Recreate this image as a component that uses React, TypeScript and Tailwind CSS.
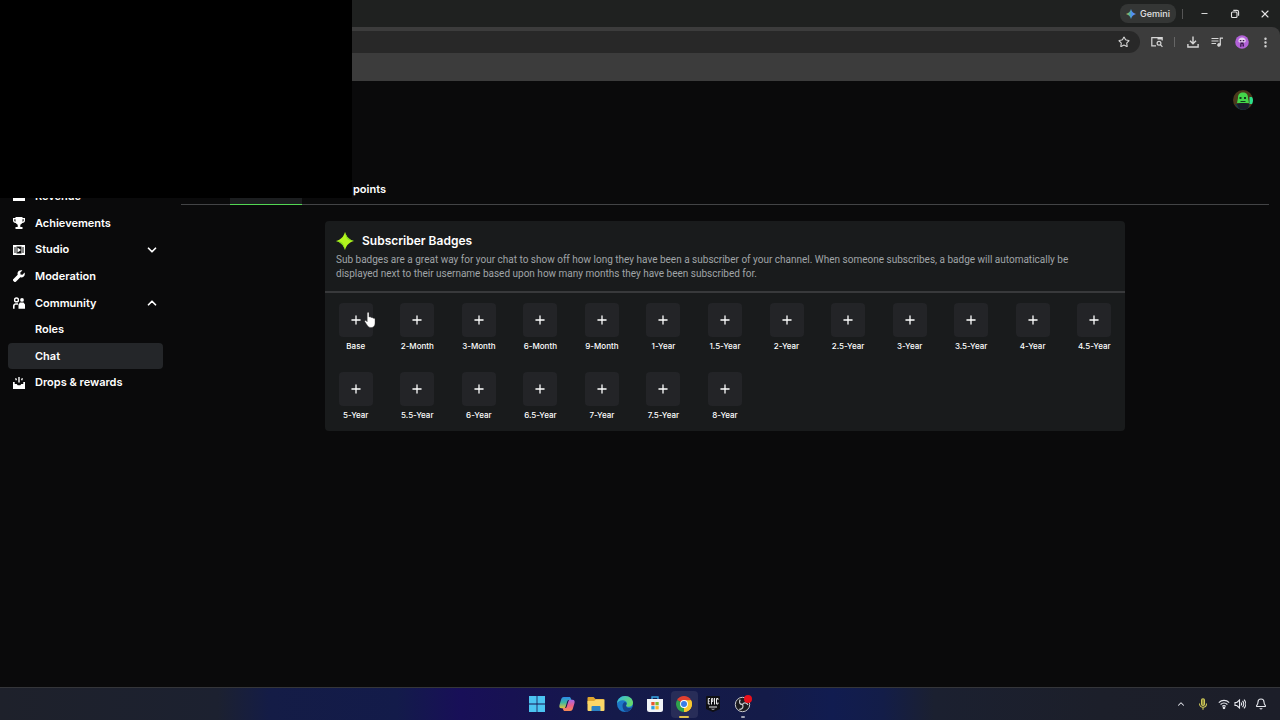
import type { ReactNode } from "react";
import { Bell, ChevronDown, ChevronUp, Minus, MoreVertical, Plus, Star, X } from "lucide-react";

const badges = [
  "Base", "2-Month", "3-Month", "6-Month", "9-Month", "1-Year", "1.5-Year",
  "2-Year", "2.5-Year", "3-Year", "3.5-Year", "4-Year", "4.5-Year",
  "5-Year", "5.5-Year", "6-Year", "6.5-Year", "7-Year", "7.5-Year", "8-Year",
];

interface NavItem {
  label: string;
  icon?: ReactNode;
  open?: boolean;
  active?: boolean;
}

const navItems: NavItem[] = [
  { label: "Revenue", icon: <RevenueIcon /> },
  { label: "Achievements", icon: <TrophyIcon /> },
  { label: "Studio", icon: <StudioIcon />, open: false },
  { label: "Moderation", icon: <WrenchIcon /> },
  { label: "Community", icon: <CommunityIcon />, open: true },
  { label: "Roles" },
  { label: "Chat", active: true },
  { label: "Drops & rewards", icon: <DropsIcon /> },
];

function RevenueIcon() {
  return (
    <svg viewBox="0 0 12 12" className="size-3" fill="currentColor">
      <path d="M1 2h10v5H1zM0 8h12v3H0z" />
    </svg>
  );
}

function TrophyIcon() {
  return (
    <svg viewBox="0 0 12 12" className="size-3" fill="currentColor">
      <path
        fillRule="evenodd"
        d="M2.5 0h7v1H12v2.5C12 5 11 6 9.200 6.100 8.700 7 8 7.500 7.300 7.700V10H9.500v2h-7v-2h2.200V7.700C4 7.500 3.300 7 2.800 6.100 1 6 0 5 0 3.500V1h2.500zM1.300 2.200v1.300c0 .6.400 1 1.200 1.200V2.200zM9.500 2.200v2.500c.8-.2 1.200-.6 1.200-1.200V2.200z"
      />
    </svg>
  );
}

function StudioIcon() {
  return (
    <svg viewBox="0 0 12 12" className="size-3">
      <path fill="currentColor" d="M0 1h12v10H0z" />
      <path fill="#0b0c0c" d="M1.500 3h1v6h-1zM9.500 3h1v6h-1zM3.500 2.500h5v7h-5z" />
      <path fill="currentColor" d="M4.500 3.500 8 6 4.500 8.500z" />
    </svg>
  );
}

function WrenchIcon() {
  return (
    <svg viewBox="0 0 12 12" className="size-3" fill="currentColor">
      <path d="M11.600 2.600 9.500 4.700 7.500 4.500 7.300 2.500 9.400.4C7.500-.3 5.300.6 4.700 2.500c-.3.8-.2 1.500 0 2.200L.5 8.900a1.500 1.500 0 0 0 0 2.200l.4.400a1.500 1.500 0 0 0 2.200 0l4.200-4.200c2.500.8 5.300-1.500 4.300-4.700z" />
    </svg>
  );
}

function CommunityIcon() {
  return (
    <svg viewBox="0 0 12 12" className="size-3" fill="currentColor">
      <path fillRule="evenodd" d="M3.500.3a2.600 2.600 0 1 1 0 5.200 2.600 2.600 0 0 1 0-5.200zm0 1.400a1.200 1.200 0 1 0 0 2.400 1.200 1.200 0 0 0 0-2.400z" />
      <circle cx="9" cy="2.900" r="1.900" />
      <path d="M0 11.700V9c0-1.700 1.200-2.800 2.800-2.800H5v1.600H3C2.100 7.800 1.600 8.300 1.600 9v2.700zM5.500 11.700V7.500L7 5.600h3.500L12 7.500v4.200z" />
    </svg>
  );
}

function DropsIcon() {
  return (
    <svg viewBox="0 0 12 12" className="size-3" fill="currentColor">
      <path d="M5.300 0h1.400v5.500H5.300zM2 1.500l1.200-.6L4 3l-1.200.5zM8.800.9l1.200.6-.8 2L8 3zM0 5h1.700v2h2l1 1.300h2.600l1-1.300h2V5H12v4H0zM0 9h12v3H0z" />
    </svg>
  );
}

function SparkIcon() {
  return (
    <svg viewBox="0 0 18 18" className="size-[18px] shrink-0">
      <path fill="#b4f51e" d="M9 0c1.500 5 4 7.500 9 9-5 1.500-7.500 4-9 9-1.500-5-4-7.500-9-9 5-1.500 7.500-4 9-9z" />
      <path fill="#86dc1e" d="M9 0c1.500 5 4 7.500 9 9h-2.500C11.500 8 9.500 5.500 9 0zM9 18c-1.500-5-4-7.500-9-9h2.500C6.500 10 8.500 12.500 9 18z" />
    </svg>
  );
}

function HandCursor() {
  return (
    <svg viewBox="0 0 12 16" className="pointer-events-none absolute top-[9px] left-[25px] z-10 h-4 w-3">
      <path
        fill="#fff"
        stroke="#333"
        strokeWidth=".4"
        d="M3.200 1.200C3.200-.2 5 0 5 1.300V5l1-.2c.6 0 .9.300 1 .7l1-.1c.6 0 .9.400 1 .8h.8c.8 0 1.200.5 1.200 1.300v3.700c0 2.500-1.300 4.300-3.800 4.300-2 0-3-.8-4-2.300L.9 9.800C.3 8.800 1.400 8 2.200 8.800l1 1z"
      />
    </svg>
  );
}

function BrowserChrome() {
  return (
    <header>
      <div className="flex h-[27px] items-center justify-end bg-[#1f2120] text-[#e3e3e3]">
        <button className="flex h-[19px] items-center gap-1 rounded-lg bg-[#343635] px-1.5 text-[9px] font-medium">
          <svg viewBox="0 0 10 10" className="size-2.5">
            <defs>
              <linearGradient id="gem" x1="0" y1="0" x2="1" y2="0">
                <stop offset="0" stopColor="#e8c04a" />
                <stop offset=".3" stopColor="#58b98a" />
                <stop offset=".6" stopColor="#4c8df6" />
                <stop offset="1" stopColor="#6f9cf5" />
              </linearGradient>
            </defs>
            <path fill="url(#gem)" d="M5 0c.7 2.700 2.300 4.300 5 5-2.700.7-4.300 2.300-5 5-.7-2.700-2.300-4.300-5-5 2.700-.7 4.300-2.300 5-5z" />
          </svg>
          Gemini
        </button>
        <span className="ml-1.5 h-2.5 w-px bg-[#555]" />
        <button aria-label="Minimize" className="ml-1.5 flex w-[30px] justify-center">
          <Minus size={9} strokeWidth={2.500} />
        </button>
        <button aria-label="Restore" className="flex w-[31px] justify-center">
          <svg viewBox="0 0 10 10" className="size-2.5" fill="none" stroke="currentColor" strokeWidth="1.100">
            <rect x="1.500" y="3" width="5.500" height="5.500" rx="1" />
            <path d="M3.300 1.400H7A1.600 1.600 0 0 1 8.600 3v3.800" />
          </svg>
        </button>
        <button aria-label="Close" className="flex w-[30px] justify-center">
          <X size={12} strokeWidth={2.200} />
        </button>
      </div>
      <div className="bg-[#1f2120]">
        <div className="h-[54px] rounded-tr-lg bg-[#3c3c3c] pt-1">
          <div className="flex items-center pr-2 text-[#d6d6d6]">
            <div className="flex h-[22px] flex-1 items-center justify-end rounded-r-full bg-[#282828] pr-2.5">
              <button aria-label="Bookmark this tab">
                <Star size={12} strokeWidth={2.200} />
              </button>
            </div>
            <button aria-label="Search this page" className="ml-[11px]">
              <svg viewBox="0 0 12 12" className="size-3" fill="none" stroke="currentColor" strokeWidth="1.200">
                <path d="M5 9.800H.8V1.600h10.400v3" />
                <path d="M6.500 2.500h4.500" strokeWidth="2" />
                <circle cx="8" cy="7.300" r="1.900" />
                <path d="m9.400 8.700 2 2.200" />
              </svg>
            </button>
            <span className="ml-[11px] h-2.5 w-px bg-[#666]" />
            <button aria-label="Downloads" className="ml-3">
              <svg viewBox="0 0 12 12" className="size-3" fill="none" stroke="currentColor" strokeWidth="1.400">
                <path d="M6 .5v7M3 4.800l3 3 3-3M.9 8v3h10.200V8" />
              </svg>
            </button>
            <button aria-label="Media controls" className="ml-3">
              <svg viewBox="0 0 12 12" className="size-3" fill="none" stroke="currentColor" strokeWidth="1.200">
                <path d="M.5 2.500h7M.5 5h7M.5 7.500H5M9.300 9V2.200H12" />
                <circle cx="8" cy="8.900" r="1.200" fill="currentColor" />
              </svg>
            </button>
            <button aria-label="Browser profile" className="ml-3">
              <svg viewBox="0 0 14 14" className="size-3.5">
                <circle cx="7" cy="7" r="6.800" fill="#b262d8" />
                <path fill="#e9d3f3" d="M3.300 6.200C3.500 3.800 5 2.600 7 2.600s3.700 1.200 3.800 3.600L9.600 7.500H4.500z" />
                <path fill="#3a1b4c" d="M4.800 5h1.600v1.300H4.800zM7.700 5h1.600v1.300H7.700zM5.500 7.600h3l.6 4h-1.600V9h-1v2.800H5z" />
              </svg>
            </button>
            <button aria-label="Menu" className="ml-2.5">
              <MoreVertical size={13} strokeWidth={2.500} />
            </button>
          </div>
        </div>
      </div>
    </header>
  );
}

function Sidebar() {
  return (
    <nav className="w-[171px] shrink-0 pt-[102px] pr-2 pl-2">
      {/* eight equal rows */}
      <ul className="grid h-[213px] auto-rows-fr">
        {navItems.map((item) => (
          <li key={item.label}>
            <a
              href="#"
              className={`flex h-full items-center rounded-sm pr-1 pl-[5px] text-[11px] font-semibold text-white ${
                item.active ? "bg-[#242629]" : ""
              }`}
            >
              <span className="mr-[10px] w-3">{item.icon}</span>
              <span className="flex-1">{item.label}</span>
              {item.open === true && <ChevronUp size={14} strokeWidth={3} />}
              {item.open === false && <ChevronDown size={14} strokeWidth={3} />}
            </a>
          </li>
        ))}
      </ul>
    </nav>
  );
}

function BadgeCard() {
  return (
    <section className="mx-auto mt-4 max-w-[800px] rounded-sm bg-[#191b1c]">
      <div className="border-b-2 border-[#38393b] px-[11px] pt-2.5 pb-2.5">
        <h2 className="flex h-5 items-center gap-2 text-[12px] font-semibold text-white">
          <SparkIcon />
          Subscriber Badges
        </h2>
        <p className="mt-0.5 pr-2.5 font-['Roboto',sans-serif] text-[10px] leading-[14px] text-[#a0a5a8]">
          Sub badges are a great way for your chat to show off how long they have been a subscriber of your channel.
          When someone subscribes, a badge will automatically be displayed next to their username based upon how many
          months they have been subscribed for.
        </p>
      </div>
      <div className="grid grid-cols-[repeat(13,minmax(0,1fr))] gap-y-5 pt-2.5 pb-2.5">
        {badges.map((badge) => (
          <div key={badge} className="relative flex flex-col items-center">
            <div className="relative">
              <button
                aria-label={`Upload ${badge} badge`}
                className="flex size-[34px] items-center justify-center rounded-sm bg-[#232427] text-white"
              >
                <Plus size={14} strokeWidth={2.200} />
              </button>
              {badge === "Base" && <HandCursor />}
            </div>
            <span className="mt-[3px] text-[8px] leading-3 font-medium whitespace-nowrap text-white">{badge}</span>
          </div>
        ))}
      </div>
    </section>
  );
}

function Taskbar() {
  const tile = "flex h-[27px] w-[27px] flex-col items-center justify-center justify-self-center rounded-sm";
  return (
    <footer className="grid h-[33px] grid-cols-[1fr_auto_1fr] items-center border-t border-[#35363a] bg-[linear-gradient(90deg,#1e212b_0%,#1c2130_17%,#141c46_21%,#131b4a_31%,#180f58_36%,#171252_40%,#151a4a_48%,#141b48_60%,#111c50_65%,#131d48_69%,#1b2030_73%,#1c1f2a_86%,#1c1e29_100%)]">
      <span />
      <div className="grid w-[235px] grid-cols-8">
        <button aria-label="Start" className={tile}>
          <svg viewBox="0 0 16 16" className="size-4" fill="#4cc4f2">
            <path d="M0 0h7.600v7.600H0zM8.400 0H16v7.600H8.400zM0 8.400h7.600V16H0zM8.400 8.400H16V16H8.400z" />
          </svg>
        </button>
        <button aria-label="Copilot" className={tile}>
          <svg viewBox="0 0 16 16" className="size-4">
            <defs>
              <linearGradient id="copA" x1="0" y1="0" x2="0" y2="1">
                <stop offset="0" stopColor="#2c8bea" />
                <stop offset=".5" stopColor="#3fb7a0" />
                <stop offset="1" stopColor="#e8c23a" />
              </linearGradient>
              <linearGradient id="copB" x1="0" y1="0" x2="0" y2="1">
                <stop offset="0" stopColor="#a06ae8" />
                <stop offset=".5" stopColor="#ec5f8d" />
                <stop offset="1" stopColor="#f58a52" />
              </linearGradient>
            </defs>
            <path fill="url(#copA)" d="M4.800 1h5.400c1 0 1.400.6 1.700 1.500L12.500 4H10c-1 0-1.500.5-1.800 1.500L6.500 11c-.3 1-.8 1.300-1.700 1.300H2.500C.6 12.300 0 11 .5 9L2.200 3.200C2.700 1.700 3.500 1 4.800 1z" />
            <path fill="url(#copB)" d="M11.200 15H5.800c-1 0-1.400-.6-1.700-1.500L3.500 12H6c1 0 1.500-.5 1.800-1.500L9.500 5c.3-1 .8-1.300 1.700-1.300h2.300c1.900 0 2.500 1.300 2 3.300l-1.700 5.800c-.5 1.500-1.300 2.200-2.600 2.200z" />
          </svg>
        </button>
        <button aria-label="File Explorer" className={tile}>
          <svg viewBox="0 0 18 16" className="h-4 w-[18px]">
            <path fill="#e0a52e" d="M.5 2A1 1 0 0 1 1.500 1h5l2 2H16a1 1 0 0 1 1 1v4H.5z" />
            <path fill="#fbd667" d="M.5 5H7l2-1.500h8.500V14a1 1 0 0 1-1 1h-15a1 1 0 0 1-1-1z" />
            <path fill="#2b83c4" d="M4.500 15v-4a1 1 0 0 1 1-1h7a1 1 0 0 1 1 1v4z" />
          </svg>
        </button>
        <button aria-label="Edge" className={tile}>
          <svg viewBox="0 0 16 16" className="size-4">
            <defs>
              <linearGradient id="edge" x1="0" y1="0" x2="1" y2=".4">
                <stop offset="0" stopColor="#31b8e8" />
                <stop offset="1" stopColor="#66d96e" />
              </linearGradient>
            </defs>
            <circle cx="8" cy="8" r="8" fill="#1c78c8" />
            <path fill="url(#edge)" d="M0 7.500C.3 3.200 3.700 0 8 0c4.800 0 8 3.300 8 6.800 0 2.500-1.900 4-4.200 4-1.800 0-2.800-.6-2.800-1.300 0-.5.900-.9.900-2.200C9.900 5.500 8 4.200 5.600 4.200 3 4.200.8 5.500 0 7.500z" />
            <path fill="#15458f" d="M5.500 10c0-2 1-3.500 2.500-4 1.300.4 1.800 1.300 1.400 2.400-1 2 .6 3.600 3 3.600 1.200 0 2-.3 2.800-.8C14 14 11.500 15.600 9 15.800 6.800 15 5.500 12.500 5.500 10z" />
          </svg>
        </button>
        <button aria-label="Microsoft Store" className={tile}>
          <svg viewBox="0 0 16 16" className="size-4">
            <path fill="none" stroke="#36a6e6" strokeWidth="1.400" d="M5 4.500V1h6v3.500" />
            <path fill="#f1f4f8" d="M0 3h16v10.500A2.500 2.500 0 0 1 13.500 16h-11A2.500 2.500 0 0 1 0 13.500z" />
            <path fill="#e8562f" d="M4.300 6h3.300v3.300H4.300z" />
            <path fill="#7fba2c" d="M8.400 6h3.300v3.300H8.400z" />
            <path fill="#2a9fe0" d="M4.300 10.100h3.300v3.300H4.300z" />
            <path fill="#f8b82c" d="M8.400 10.100h3.300v3.300H8.400z" />
          </svg>
        </button>
        <button aria-label="Chrome" className={`${tile} relative bg-[#282d58]`}>
          <svg viewBox="0 0 16 16" className="size-4">
            <path fill="#e2402f" d="M8 8 1.100 4a8 8 0 0 1 13.800 0z" />
            <path fill="#f9c72e" d="M8 8l6.900-4A8 8 0 0 1 8 16z" />
            <path fill="#2fa24c" d="M8 8v8A8 8 0 0 1 1.100 4z" />
            <path fill="#f9c72e" d="M8 4.300h7.100A8 8 0 0 1 8 16l3.200-6.200z" />
            <circle cx="8" cy="8" r="3.900" fill="#fff" />
            <circle cx="8" cy="8" r="3" fill="#3a7de8" />
          </svg>
          <span className="absolute bottom-0 h-0.5 w-2.5 rounded-full bg-[#e0c04a]" />
        </button>
        <button aria-label="Epic Games" className={tile}>
          <svg viewBox="0 0 14 16" className="h-4 w-3.5">
            <path fill="#101014" d="M1 0h12a1 1 0 0 1 1 1v12l-7 3-7-3V1a1 1 0 0 1 1-1z" />
            <path
              fill="none"
              stroke="#e8e8ea"
              strokeWidth="1"
              d="M4 2.500H2.300v5.500H4M2.300 5.200h1.400M5.500 8.500v-6h1.300v3H5.500M8.500 2v6.500M12 4V2.500h-1.500v5.500H12V6.500M3 11h8"
            />
            <path fill="#b0b0b4" d="M4.500 12.800h5L7 14z" />
          </svg>
        </button>
        <button aria-label="OBS Studio" className={`${tile} relative`}>
          <svg viewBox="0 0 18 18" className="size-[18px]">
            <circle cx="8.500" cy="9.500" r="7.200" fill="#1c1c20" stroke="#c9c9cd" strokeWidth="1" />
            <path fill="none" stroke="#c9c9cd" strokeWidth="1.300" d="M8.500 9.500C5.500 9.500 4.800 7 6.200 4.600M8.500 9.500c1.400-2.500 4.200-2 5.500.5M8.500 9.500c1.500 2.500-.2 4.800-3.200 5" />
            <circle cx="14" cy="4" r="4" fill="#e8101c" />
          </svg>
          <span className="absolute bottom-0 h-0.5 w-1 rounded-full bg-[#a0a3b5]" />
        </button>
      </div>
      <div className="flex items-center justify-end pr-[13px] text-[#e4e6ec]">
        <button aria-label="Show hidden icons" className="mr-3">
          <ChevronUp size={10} strokeWidth={2.500} />
        </button>
        <button aria-label="Microphone" className="mr-2.5">
          <svg viewBox="0 0 10 12" className="h-3 w-2.5" fill="none" stroke="#cfc95a" strokeWidth="1.100">
            <rect x="3.500" y=".8" width="3" height="6.700" rx="1.500" fill="#8a873a" />
            <path d="M1.500 5.500c0 5 7 5 7 0M5 9.300v2.400" />
          </svg>
        </button>
        <button aria-label="Network and volume" className="mr-[9px] flex gap-1">
          <svg viewBox="0 0 12 12" className="size-3" fill="none" stroke="currentColor" strokeWidth="1.100">
            <path d="M.8 4.600c3-3 7.400-3 10.400 0M2.600 6.500c2-2 4.800-2 6.800 0M4.200 8.300c1.100-1 2.500-1 3.600 0" />
            <circle cx="6" cy="9.800" r=".8" fill="currentColor" />
          </svg>
          <svg viewBox="0 0 12 12" className="size-3" fill="none" stroke="currentColor" strokeWidth="1.100">
            <path d="M1 4.500h1.800L5.500 2v8L2.800 7.500H1zM7 4.500c.8.9.8 2.100 0 3M8.500 3c1.700 1.700 1.700 4.300 0 6M10 1.700c2.300 2.500 2.300 6.100 0 8.600" />
          </svg>
        </button>
        <button aria-label="Notifications">
          <Bell size={12} strokeWidth={2.200} />
        </button>
      </div>
    </footer>
  );
}

export default function App() {
  return (
    <div className="relative flex min-h-screen flex-col bg-[#0a0a0b] font-['Inter',sans-serif]">
      <BrowserChrome />
      <div className="flex flex-1">
        <Sidebar />
        <main className="flex-1 pr-[11px] pl-2.5">
          <div className="flex h-[94px] justify-end pt-2 pr-[15px]">
            <button aria-label="Account" className="size-[22px]">
              <svg viewBox="0 0 22 22" className="size-[22px]">
                <circle cx="11" cy="11" r="10" fill="#4b3a1c" />
                <path fill="#17374a" d="M3 15h15l-2 4.500a10 10 0 0 1-10 0z" />
                <path fill="#43d64a" d="M6 9c0-4 2-5.500 5-5.500S16 5 16 9l1 5H5z" />
                <path fill="#2be08a" d="M17.500 8h2.500c1.500 2 1.200 5 0 7h-2.500z" />
                <path fill="#0f3d1c" d="M7.500 8h2v2h-2zM12 8h2v2h-2zM8.500 12h5v1h-5z" />
                <path fill="#1b1c2a" d="M5 15c3-1.500 9-1.500 12 0l-1 4.500a10 10 0 0 1-9 0z" />
              </svg>
            </button>
          </div>
          <div className="flex h-[30px] border-b border-[#434446] pl-[49px]">
            <button aria-label="Subscribers" className="-mb-px w-[72px] border-b border-[#53d653] bg-[#1c1e20]" />
            <button className="ml-[51px] text-[11px] font-semibold text-white">points</button>
          </div>
          <BadgeCard />
        </main>
      </div>
      <Taskbar />
      {/* black capture panel floating over the top left corner */}
      <div className="absolute top-0 left-0 z-20 h-[198px] w-[352px] bg-black" />
    </div>
  );
}
